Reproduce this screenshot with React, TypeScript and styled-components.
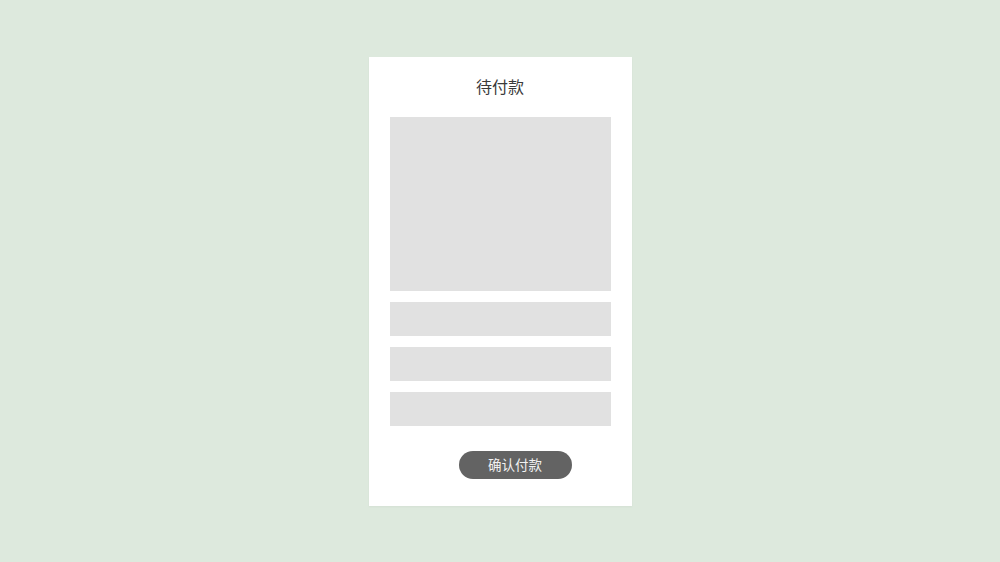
import React from "react";
import styled, { createGlobalStyle } from "styled-components";

const GlobalStyle = createGlobalStyle`
  html, body {
    margin: 0;
    padding: 0;
    background-color: #dde9dd;
    font-family: "Noto Sans CJK SC", "Noto Sans", sans-serif;
  }
`;

const Page = styled.div`
  width: 1000px;
  height: 562px;
  display: flex;
  justify-content: center;
  align-items: flex-start;
  padding-top: 57px;
  box-sizing: border-box;
`;

const Card = styled.div`
  width: 263px;
  box-sizing: border-box;
  padding: 19px 21px 27px;
  background-color: #ffffff;
  display: flex;
  flex-direction: column;
  box-shadow: 0 1px 2px rgba(0, 0, 0, 0.04);
`;

const Title = styled.h1`
  margin: 0 0 20px;
  font-size: 16px;
  line-height: 21px;
  font-weight: 400;
  color: #3a3a3a;
  text-align: center;
`;

const Placeholder = styled.div<{ $tall?: boolean }>`
  height: ${(p) => (p.$tall ? 174 : 34)}px;
  background-color: #e1e1e1;
`;

const Rows = styled.div`
  display: flex;
  flex-direction: column;
  gap: 11px;
`;

const Footer = styled.div`
  display: flex;
  justify-content: center;
  padding-left: 30px;
  margin-top: 25px;
`;

const PayButton = styled.button`
  width: 113px;
  height: 28px;
  border: none;
  border-radius: 14px;
  background-color: #636363;
  color: #f2f2f2;
  font-family: inherit;
  font-size: 13.5px;
  line-height: 26px;
  padding: 0 0 2px;
  cursor: pointer;
`;

const App = () => {
  return (
    <>
      <GlobalStyle />
      <Page>
        <Card>
          <Title>待付款</Title>
          <Rows>
            <Placeholder $tall />
            <Placeholder />
            <Placeholder />
            <Placeholder />
          </Rows>
          <Footer>
            <PayButton>确认付款</PayButton>
          </Footer>
        </Card>
      </Page>
    </>
  );
};

export default App;
